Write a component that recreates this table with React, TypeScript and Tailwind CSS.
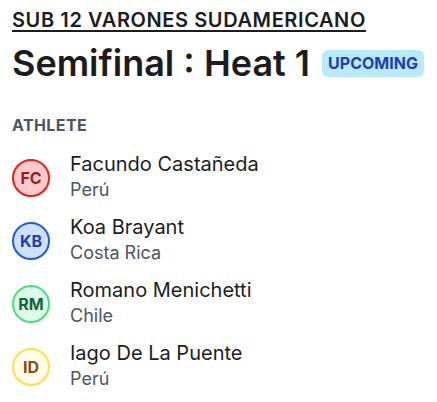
import React from "react";

const athletes = [
  { initials: "FC", name: "Facundo Castañeda", country: "Perú", cls: "bg-[#fecaca] border-[#ef1c1c] text-[#991b1b]" },
  { initials: "KB", name: "Koa Brayant", country: "Costa Rica", cls: "bg-[#cfe0fd] border-[#1d5be0] text-[#1e40af]" },
  { initials: "RM", name: "Romano Menichetti", country: "Chile", cls: "bg-[#dcfce7] border-[#4ade80] text-[#166534]" },
  { initials: "ID", name: "Iago De La Puente", country: "Perú", cls: "bg-[#fefce8] border-[#fde047] text-[#854d0e]" },
];

export default function App() {
  return (
    <div
      className="w-[437px] h-[402px] bg-white px-3 pt-1.5"
      style={{ fontFamily: "Inter, 'Noto Sans', sans-serif" }}
    >
      <div className="text-xl leading-7 font-semibold uppercase underline underline-offset-[3px] decoration-2 tracking-[0.03em] text-[#1c1c1e]">
        Sub 12 Varones Sudamericano
      </div>
      <div className="mt-[9px] flex items-center gap-3">
        <h1 className="text-4xl leading-10 font-semibold text-[#1c1c1e]">Semifinal : Heat 1</h1>
        <span className="rounded-md bg-[#b9e9fc] px-1.5 h-[27px] flex items-center text-base font-bold text-[#1e40af]">
          UPCOMING
        </span>
      </div>
      <div className="mt-[30px] text-base leading-6 font-bold tracking-wide text-[#4b5563]">ATHLETE</div>
      <div className="mt-[15px] flex flex-col gap-3">
        {athletes.map((a) => (
          <div key={a.name} className="flex items-center">
            <div
              className={`w-[38px] h-[38px] rounded-full border-2 flex items-center justify-center text-base font-bold shrink-0 ${a.cls}`}
            >
              {a.initials}
            </div>
            <div className="ml-5 flex flex-col">
              <div className="text-xl leading-[25px] text-[#1c1c1e]">{a.name}</div>
              <div className="text-lg leading-[26px] text-[#4b5563]">{a.country}</div>
            </div>
          </div>
        ))}
      </div>
    </div>
  );
}
